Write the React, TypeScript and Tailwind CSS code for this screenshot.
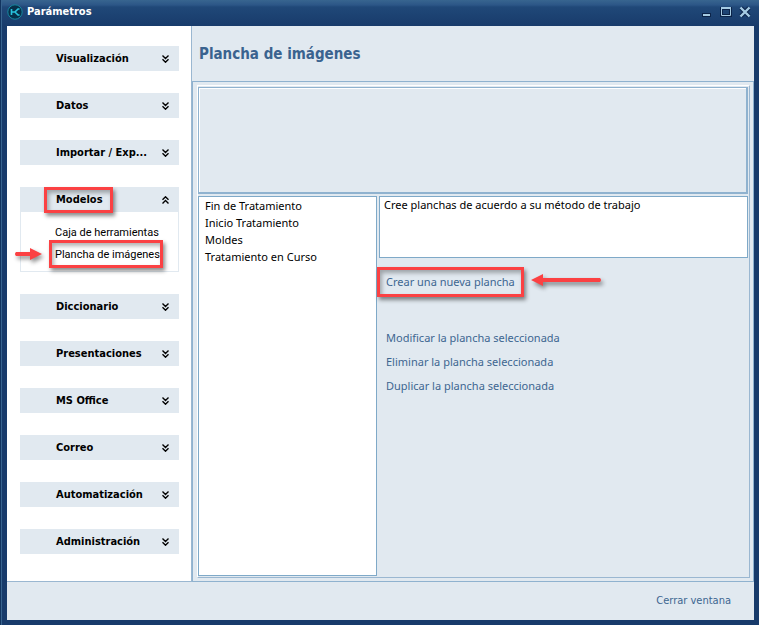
import { useState } from 'react'

type Section = {
  label: string
  items?: string[]
}

const sections: Section[] = [
  { label: 'Visualización' },
  { label: 'Datos' },
  { label: 'Importar / Exp...' },
  { label: 'Modelos', items: ['Caja de herramientas', 'Plancha de imágenes'] },
  { label: 'Diccionario' },
  { label: 'Presentaciones' },
  { label: 'MS Office' },
  { label: 'Correo' },
  { label: 'Automatización' },
  { label: 'Administración' },
]

const templates = ['Fin de Tratamiento', 'Inicio Tratamiento', 'Moldes', 'Tratamiento en Curso']

const actions = [
  'Modificar la plancha seleccionada',
  'Eliminar la plancha seleccionada',
  'Duplicar la plancha seleccionada',
]

function DoubleChevron({ up = false }: { up?: boolean }) {
  return (
    <svg width="7" height="8" viewBox="0 0 7 8" className={up ? 'rotate-180' : ''} fill="none" stroke="#000" strokeWidth="1.4" aria-hidden="true">
      <path d="M0.5 0.5 3.5 3.5 6.5 0.5M0.5 4.2 3.5 7.2 6.5 4.2" />
    </svg>
  )
}

function Highlight({ className }: { className: string }) {
  return (
    <span className={`pointer-events-none absolute border-3 border-[#fb4143] shadow-[2px_3px_4px_rgba(0,0,0,0.45),inset_2px_3px_4px_rgba(0,0,0,0.3)] ${className}`} />
  )
}

function Arrow({ direction, className }: { direction: 'left' | 'right'; className: string }) {
  return (
    <svg height="16" viewBox={direction === 'right' ? '0 0 30 16' : '0 0 72 16'} className={`pointer-events-none absolute overflow-visible drop-shadow-[2px_3px_2px_rgba(0,0,0,0.45)] ${className}`} fill="#fb4143" aria-hidden="true">
      {direction === 'right' ? (
        <path d="M2 6h14V2l12 6-12 6v-4H2q-2-2 0-4Z" />
      ) : (
        <path d="M0 8 12 2v4h57q2 2 0 4H12v4Z" />
      )}
    </svg>
  )
}

function TitleBar() {
  return (
    <header className="flex h-[26px] items-center justify-between pr-[3px] pb-[2px]">
      <h1 className="flex items-center gap-1 text-[11px] font-bold text-white">
        <svg width="16" height="16" viewBox="0 0 16 16" fill="none" aria-hidden="true">
          <circle cx="8" cy="8" r="7.2" fill="#06304a" stroke="#1787a0" />
          <path d="M4.5 5v6M4.5 8h3M12.5 5H11L8 8l3 3h1.5" stroke="#28c2dc" strokeWidth="1.6" />
        </svg>
        Parámetros
      </h1>
      <div className="flex items-center gap-[7px] text-[#a6cbe3]">
        <button aria-label="Minimizar">
          <svg width="12" height="12" viewBox="0 0 12 12">
            <path d="M1 7h9v4H1z" fill="#0c2449" />
            <path d="M2 8h7v2H2z" fill="currentColor" />
          </svg>
        </button>
        <button aria-label="Maximizar">
          <svg width="12" height="12" viewBox="0 0 12 12" fill="none">
            <path d="M1.5 2.5h9v7h-9z" stroke="#0c2449" strokeWidth="3" />
            <path d="M1.5 1.5h9v8h-9z" stroke="currentColor" />
            <path d="M1 1h10v2H1z" fill="currentColor" />
          </svg>
        </button>
        <button aria-label="Cerrar">
          <svg width="12" height="12" viewBox="0 0 12 12" fill="none">
            <path d="m2 2 8 8M10 2l-8 8" stroke="#0c2449" strokeWidth="4.5" />
            <path d="m1.5 1.5 9 9M10.5 1.5l-9 9" stroke="currentColor" strokeWidth="2.4" />
          </svg>
        </button>
      </div>
    </header>
  )
}

function Sidebar() {
  const [open, setOpen] = useState('Modelos')

  return (
    <nav className="flex w-[185px] shrink-0 flex-col gap-[22px] border-r border-b border-[#9ab7d1] bg-white py-5 pr-3 pl-[13px]">
      {sections.map(({ label, items }) => (
        <div key={label}>
          <button
            onClick={() => setOpen(open === label ? '' : label)}
            className="flex h-[25px] w-full items-center justify-between bg-[#e1e9f0] pt-px pr-[10px] pl-9 text-[11px] font-bold text-black"
          >
            <span className="relative">
              {label}
              {label === 'Modelos' && <Highlight className="-inset-y-[5px] -right-[10px] -left-3" />}
            </span>
            <DoubleChevron up={!!items && open === label} />
          </button>
          {items && open === label && (
            <ul className="border border-t-0 border-[#e1e9f0] pt-[7px] pb-2 pl-[34px]">
              {items.map((item) => (
                <li key={item} className="relative h-[22px]">
                  <button className="font-[Roboto,sans-serif] text-[11px] leading-[22px] whitespace-nowrap text-black">{item}</button>
                  {item === 'Plancha de imágenes' && (
                    <>
                      <Highlight className="-top-px right-[15px] -bottom-[5px] -left-[6px]" />
                      <Arrow className="top-[5px] -left-[41px] w-[30px]" direction="right" />
                    </>
                  )}
                </li>
              ))}
            </ul>
          )}
        </div>
      ))}
    </nav>
  )
}

function Workspace() {
  return (
    <main className="flex min-w-0 flex-1 flex-col">
      <h2 className="flex h-[55px] items-center pt-[2px] pl-[7px] text-[15px] font-bold text-[#3a638f]">Plancha de imágenes</h2>
      <div className="flex flex-1 border border-[#8fb2cf] pt-[3px] pr-[3px] pb-[3px] pl-1">
        <div className="flex flex-1 flex-col gap-[2px] border border-t-white border-r-[#9ab7d1] border-b-[#9ab7d1] border-l-white pt-px pr-px pb-px">
          <section aria-label="Vista previa" className="h-[107px] border border-r-2 border-b-2 border-[#8fb2cf] shadow-[inset_1px_1px_#fff]" />
          <div className="flex flex-1 gap-[2px] font-['Noto_Sans',sans-serif] text-[11px]">
            <ul className="w-[179px] shrink-0 border border-[#7fa9c8] bg-white px-[6px] leading-[17px] text-black">
              {templates.map((name) => (
                <li key={name}>{name}</li>
              ))}
            </ul>
            <div className="flex min-w-0 flex-1 flex-col items-start text-[#3d6690]">
              <textarea
                aria-label="Descripción"
                readOnly
                defaultValue="Cree planchas de acuerdo a su método de trabajo"
                className="h-[62px] w-full resize-none border border-[#7fa9c8] bg-white px-1 leading-4 text-black"
              />
              <div className="relative mt-4 ml-[7px] leading-4">
                <button>Crear una nueva plancha</button>
                <Highlight className="-inset-x-[9px] -inset-y-[7px]" />
                <Arrow direction="left" className="-top-[2px] left-full ml-4 w-[72px]" />
              </div>
              <div className="mt-10 ml-[7px] flex flex-col items-start gap-2 leading-4">
                {actions.map((action) => (
                  <button key={action}>{action}</button>
                ))}
              </div>
            </div>
          </div>
        </div>
      </div>
    </main>
  )
}

export default function App() {
  return (
    <div className="flex min-h-screen flex-col bg-[#183b6b] bg-[linear-gradient(to_bottom,#38658f_0px,#2c5687_5px,#204878_7px,#183b6b_26px)] pr-[5px] pb-[5px] pl-[7px] font-['DejaVu_Sans_Condensed','DejaVu_Sans',sans-serif] shadow-[inset_1px_0_#12345f,inset_2px_0_#38648f]">
      <TitleBar />
      <div className="flex flex-1 flex-col bg-[#e1e9f0]">
        <div className="flex flex-1">
          <Sidebar />
          <Workspace />
        </div>
        <footer className="flex h-[38px] items-center justify-end pt-px pr-[23px] text-[11px] text-[#3d6690]">
          <button>Cerrar ventana</button>
        </footer>
      </div>
    </div>
  )
}
